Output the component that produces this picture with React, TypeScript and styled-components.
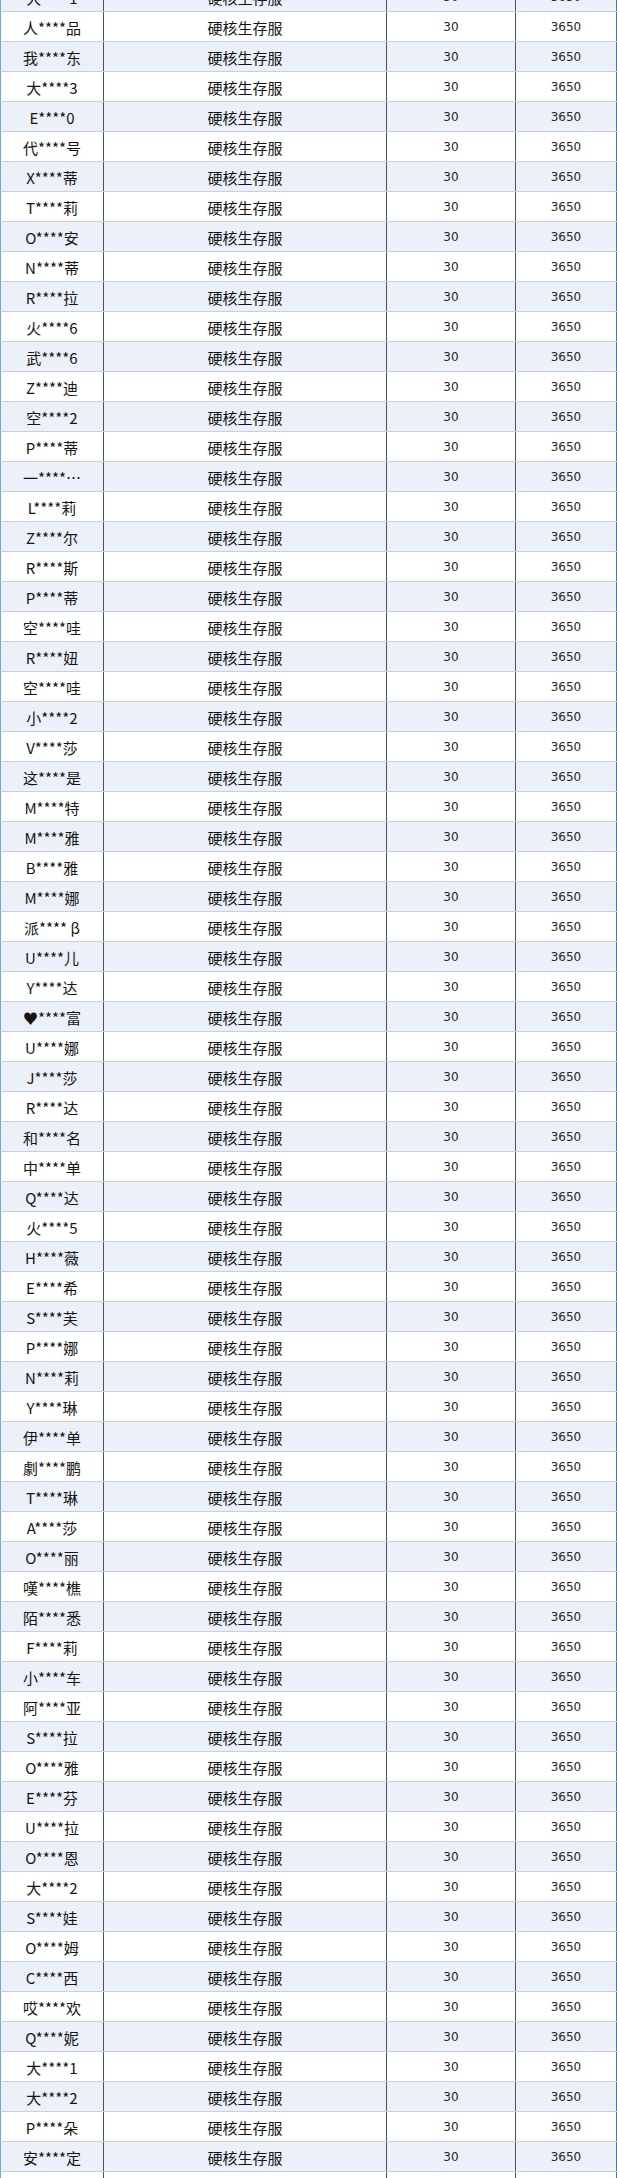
import React from "react";
import styled, { createGlobalStyle } from "styled-components";

const GlobalStyle = createGlobalStyle`
  html, body {
    margin: 0;
    padding: 0;
    background: #ffffff;
  }
  * {
    box-sizing: border-box;
  }
`;

const Table = styled.div`
  width: 617px;
  margin-top: -18px;
  overflow: hidden;
`;

const Row = styled.div<{ $striped: boolean }>`
  display: grid;
  grid-template-columns: 103px 283px 129px 101px;
  height: 30px;
  border-left: 1px solid #79a7c4;
  border-bottom: 1px solid #c3d1e3;
  background: ${(p) => (p.$striped ? "#ebf0f9" : "#ffffff")};
`;

const Cell = styled.div<{ $numeric?: boolean; $last?: boolean }>`
  display: flex;
  align-items: center;
  justify-content: center;
  border-right: 1px solid ${(p) => (p.$last ? "#4a74ad" : "#3e566d")};
  white-space: nowrap;
  color: ${(p) => (p.$numeric ? "#262626" : "#141414")};
  font-family: ${(p) =>
    p.$numeric
      ? '"DejaVu Sans", Verdana, sans-serif'
      : '"Noto Sans CJK SC", "Noto Sans", sans-serif'};
  font-size: ${(p) => (p.$numeric ? "12px" : "15px")};
  padding-top: 1px;
`;

const names = [
  "大****1",
  "人****品",
  "我****东",
  "大****3",
  "E****0",
  "代****号",
  "X****蒂",
  "T****莉",
  "O****安",
  "N****蒂",
  "R****拉",
  "火****6",
  "武****6",
  "Z****迪",
  "空****2",
  "P****蒂",
  "一****…",
  "L****莉",
  "Z****尔",
  "R****斯",
  "P****蒂",
  "空****哇",
  "R****妞",
  "空****哇",
  "小****2",
  "V****莎",
  "这****是",
  "M****特",
  "M****雅",
  "B****雅",
  "M****娜",
  "派**** β",
  "U****儿",
  "Y****达",
  "♥****富",
  "U****娜",
  "J****莎",
  "R****达",
  "和****名",
  "中****单",
  "Q****达",
  "火****5",
  "H****薇",
  "E****希",
  "S****芙",
  "P****娜",
  "N****莉",
  "Y****琳",
  "伊****单",
  "劇****鹏",
  "T****琳",
  "A****莎",
  "O****丽",
  "嘆****樵",
  "陌****悉",
  "F****莉",
  "小****车",
  "阿****亚",
  "S****拉",
  "O****雅",
  "E****芬",
  "U****拉",
  "O****恩",
  "大****2",
  "S****娃",
  "O****姆",
  "C****西",
  "哎****欢",
  "Q****妮",
  "大****1",
  "大****2",
  "P****朵",
  "安****定",
  "",
];

const App = () => {
  return (
    <>
      <GlobalStyle />
      <Table>
        {names.map((name, i) => (
          <Row key={i} $striped={i % 2 === 0}>
            <Cell>{name}</Cell>
            <Cell>{name ? "硬核生存服" : ""}</Cell>
            <Cell $numeric>{name ? "30" : ""}</Cell>
            <Cell $numeric $last>
              {name ? "3650" : ""}
            </Cell>
          </Row>
        ))}
      </Table>
    </>
  );
};

export default App;
